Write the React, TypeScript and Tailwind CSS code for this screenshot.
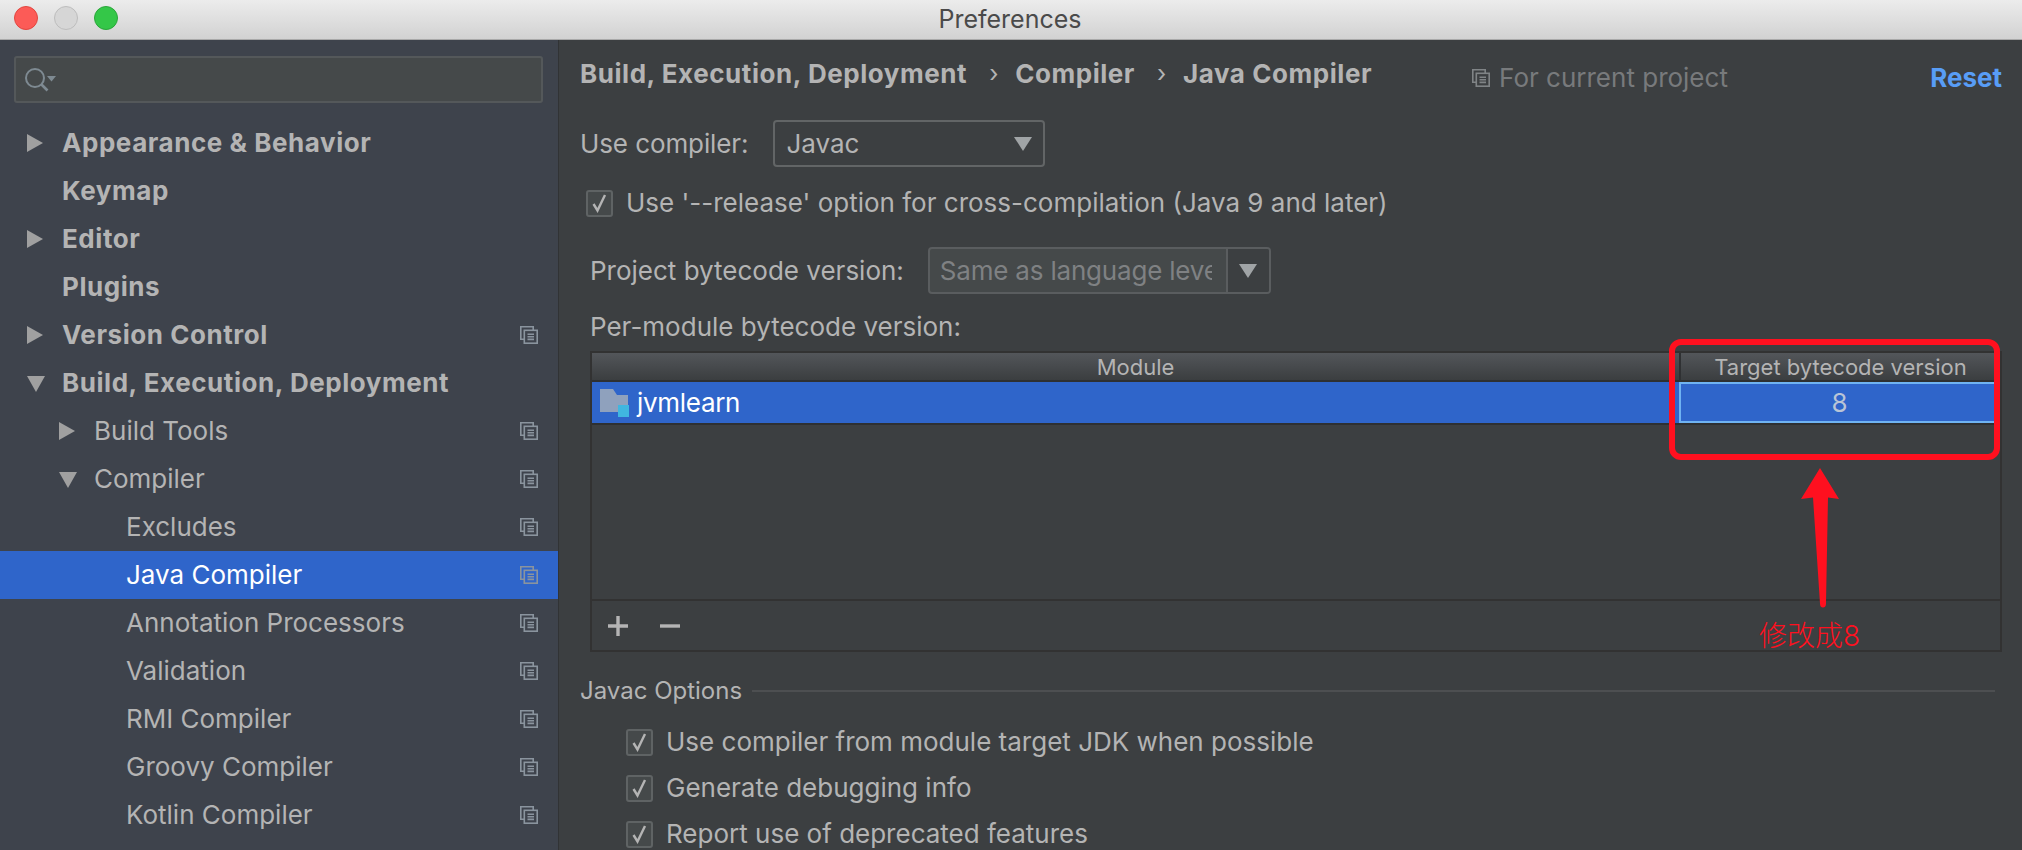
import React from "react";

function CopyIcon({ className = "text-[#8a949e]" }: { className?: string }) {
  return (
    <svg width="18" height="18" viewBox="0 0 18 18" fill="none" stroke="currentColor" strokeWidth="1.6" className={`shrink-0 ${className}`}>
      <path d="M4 13.2H.8V.8h12.4V4" />
      <rect x="4.3" y="4.3" width="12.9" height="12.9" />
      <path d="M7.5 8.2h6.5M7.5 10.8h6.5M7.5 13.4h6.5" />
    </svg>
  );
}

function Tri({ open }: { open?: boolean }) {
  return open ? (
    <svg width="18" height="18" viewBox="0 0 18 18" className="shrink-0"><path d="M0 2h18L9 18z" fill="#a0a0a0" /></svg>
  ) : (
    <svg width="16" height="18" viewBox="0 0 16 18" className="shrink-0"><path d="M0 0l16 9L0 18z" fill="#a0a0a0" /></svg>
  );
}

type Row = { label: string; level: number; bold?: boolean; arrow?: "open" | "closed"; icon?: boolean; selected?: boolean };

const rows: Row[] = [
  { label: "Appearance & Behavior", level: 0, bold: true, arrow: "closed" },
  { label: "Keymap", level: 0, bold: true },
  { label: "Editor", level: 0, bold: true, arrow: "closed" },
  { label: "Plugins", level: 0, bold: true },
  { label: "Version Control", level: 0, bold: true, arrow: "closed", icon: true },
  { label: "Build, Execution, Deployment", level: 0, bold: true, arrow: "open" },
  { label: "Build Tools", level: 1, arrow: "closed", icon: true },
  { label: "Compiler", level: 1, arrow: "open", icon: true },
  { label: "Excludes", level: 2, icon: true },
  { label: "Java Compiler", level: 2, icon: true, selected: true },
  { label: "Annotation Processors", level: 2, icon: true },
  { label: "Validation", level: 2, icon: true },
  { label: "RMI Compiler", level: 2, icon: true },
  { label: "Groovy Compiler", level: 2, icon: true },
  { label: "Kotlin Compiler", level: 2, icon: true },
];

const padClass = ["pl-[62px]", "pl-[94px]", "pl-[126px]"];
const arrowPos = ["left-[27px]", "left-[59px]", "left-[91px]"];

function TreeRow({ r }: { r: Row }) {
  return (
    <div className={`relative flex h-[48px] items-center pr-[20px] ${padClass[r.level]} ${r.selected ? "bg-[#2f65ca] text-white" : "text-[#b4b4b4]"}`}>
      {r.arrow && (
        <span className={`absolute top-[15px] ${arrowPos[r.level]}`}>
          <Tri open={r.arrow === "open"} />
        </span>
      )}
      <span className={`flex-1 text-[26px] leading-none ${r.bold ? "font-bold tracking-[0.55px]" : "font-normal"}`}>{r.label}</span>
      {r.icon && <CopyIcon />}
    </div>
  );
}

function Check() {
  return (
    <span className="flex h-[27px] w-[27px] shrink-0 items-center justify-center rounded-[3px] border-2 border-[#5f6364] bg-[#45494a]">
      <svg width="15" height="20" viewBox="0 0 15 20" fill="none" stroke="#b4b4b4" strokeWidth="2.4">
        <path d="M1.5 11l4 6.5L13 2" />
      </svg>
    </span>
  );
}

function CheckRow({ label }: { label: string }) {
  return (
    <div className="flex h-[46px] items-center gap-[13px]">
      <Check />
      <span className="text-[26px] leading-none text-[#b4b4b4]">{label}</span>
    </div>
  );
}

function Caret() {
  return <svg width="18" height="14" viewBox="0 0 18 14"><path d="M0 0h18L9 14z" fill="#a0a4a6" /></svg>;
}

function FolderIcon() {
  return (
    <svg width="29" height="28" viewBox="0 0 29 28" className="shrink-0">
      <path d="M0 0h13l4 6h11v17H0z" fill="#8fa1bd" />
      <rect x="18" y="16" width="11" height="12" fill="#40b6e0" />
    </svg>
  );
}

export default function App() {
  return (
    <div className="relative flex h-[850px] w-[2022px] flex-col overflow-hidden bg-[#3c3f41] font-['Inter','Noto_Sans_CJK_SC',sans-serif]">
      {/* title bar */}
      <header className="relative flex h-[40px] shrink-0 items-center justify-center border-b border-[#a9a9a9] bg-gradient-to-b from-[#ececec] to-[#d2d2d2]">
        <div className="absolute left-[14px] top-[6px] flex gap-[16px]">
          <span className="h-[24px] w-[24px] rounded-full border border-[#e2463f] bg-[#fc5b57]" />
          <span className="h-[24px] w-[24px] rounded-full border border-[#bdbdbd] bg-[#d6d6d6]" />
          <span className="h-[24px] w-[24px] rounded-full border border-[#2aa63a] bg-[#34c748]" />
        </div>
        <span className="-ml-[2px] text-[25px] leading-none text-[#4a4a4a]">Preferences</span>
      </header>

      <div className="flex flex-1">
        {/* sidebar */}
        <aside className="w-[559px] shrink-0 border-r border-[#313335] bg-[#3e434c]">
          <div className="ml-[14px] mr-[15px] mt-[16px] flex h-[47px] items-center rounded-[3px] border-2 border-[#54585a] bg-[#45494a] pl-[8px]">
            <svg width="34" height="26" viewBox="0 0 34 26" fill="none" stroke="#7e8a92" strokeWidth="2">
              <circle cx="11" cy="11" r="9" />
              <path d="M17.5 17.5l6 6" strokeWidth="2.6" />
              <path d="M23 9h9l-4.5 5.5z" fill="#7e8a92" stroke="none" />
            </svg>
          </div>
          <nav className="mt-[16px]">
            {rows.map((r) => (
              <TreeRow key={r.label} r={r} />
            ))}
          </nav>
        </aside>

        {/* content */}
        <main className="relative flex-1 pl-[21px] pr-[20px] text-[#b4b4b4]">
          <div className="flex h-[67px] items-center">
            <span className="text-[26px] font-bold leading-none tracking-[0.55px]">Build, Execution, Deployment</span>
            <span className="ml-[22px] w-[26px] text-[24px] leading-none">›</span>
            <span className="text-[26px] font-bold leading-none tracking-[0.55px]">Compiler</span>
            <span className="ml-[22px] w-[26px] text-[24px] leading-none">›</span>
            <span className="text-[26px] font-bold leading-none tracking-[0.55px]">Java Compiler</span>
            <span className="ml-[100px] mt-[8px] flex items-center gap-[9px]">
              <CopyIcon className="text-[#808486]" />
              <span className="text-[26px] leading-none text-[#787a7c]">For current project</span>
            </span>
            <span className="ml-auto mt-[8px] text-[26px] font-bold leading-none text-[#589df6]">Reset</span>
          </div>

          <div className="mt-[13px] flex items-center gap-[25px]">
            <span className="text-[26px] leading-none tracking-[-0.1px]">Use compiler:</span>
            <div className="flex h-[47px] w-[272px] items-center justify-between rounded-[4px] border-2 border-[#626566] bg-[#3c3f41] pl-[11px] pr-[11px]">
              <span className="text-[26px] leading-none">Javac</span>
              <Caret />
            </div>
          </div>

          <div className="ml-[6px] mt-[13px] flex h-[46px] items-center gap-[13px]">
            <Check />
            <span className="text-[26px] leading-none">Use '--release' option for cross-compilation (Java 9 and later)</span>
          </div>

          <div className="ml-[10px] mt-[21px] flex items-center gap-[24px]">
            <span className="text-[26px] leading-none">Project bytecode version:</span>
            <div className="flex h-[47px] w-[343px] items-stretch overflow-hidden rounded-[4px] border-2 border-[#5a5d5f] bg-[#45494a]">
              <span className="flex min-w-0 flex-1 items-center pl-[10px] pr-[14px]">
                <span className="block min-w-0 overflow-hidden whitespace-nowrap text-[26px] leading-[30px] tracking-[-0.2px] text-[#7f8183]">Same as language level</span>
              </span>
              <span className="flex w-[43px] shrink-0 items-center justify-center border-l-2 border-[#5a5d5f] bg-[#3c3f41]">
                <Caret />
              </span>
            </div>
          </div>

          <div className="ml-[10px] mt-[17px] flex h-[32px] items-center text-[26px] leading-none">Per-module bytecode version:</div>

          {/* table */}
          <div className="ml-[10px] mt-[8px] w-[1412px] border-2 border-[#323232] bg-[#3c3f41]">
            <div className="flex h-[27px] bg-gradient-to-b from-[#53565a] to-[#3b3e40] text-[22px] leading-none text-[#b4b4b4]">
              <div className="flex flex-1 items-center justify-center">Module</div>
              <div className="flex w-[321px] items-center justify-center border-l-2 border-[#2f3133]">Target bytecode version</div>
            </div>
            <div className="flex h-[45px] border-y-2 border-[#2e3032] bg-[#2f65ca]">
              <div className="flex flex-1 items-center gap-[8px] pl-[8px] text-[26px] leading-none tracking-[-0.3px] text-white">
                <FolderIcon />
                <span>jvmlearn</span>
              </div>
              <div className="flex w-[321px] items-center justify-center border-2 border-[#6fb3f2] text-[26px] leading-none text-[#b9c4d6]">8</div>
            </div>
            <div className="h-[176px] border-b-2 border-[#323232]" />
            <div className="flex h-[49px] items-center gap-[29px] pl-[14px]">
              <svg width="24" height="24" viewBox="0 0 24 24" stroke="#b4b4b4" strokeWidth="3.4"><path d="M12 2v20M2 12h20" /></svg>
              <svg width="22" height="24" viewBox="0 0 22 24" stroke="#b4b4b4" strokeWidth="3.4"><path d="M1 12h20" /></svg>
            </div>
          </div>

          {/* Javac options */}
          <div className="mt-[23px] flex h-[32px] items-center gap-[10px]">
            <span className="text-[24px] leading-none">Javac Options</span>
            <span className="h-[2px] w-[1243px] bg-[#4d4f51]" />
          </div>
          <div className="ml-[46px] mt-[12px]">
            <CheckRow label="Use compiler from module target JDK when possible" />
            <CheckRow label="Generate debugging info" />
            <CheckRow label="Report use of deprecated features" />
          </div>

          {/* annotations */}
          <div className="absolute left-[1110px] top-[299px] h-[121px] w-[331px] rounded-[12px] border-[6px] border-[#ff101f]" />
          <svg className="absolute left-[1235px] top-[426px]" width="50" height="144" viewBox="0 0 50 144">
            <path d="M26 2L45 33l-11-1.5-2 106q0 4-3 4t-3-4l-7-106L7 33z" fill="#ff101f" />
          </svg>
          <span className="absolute left-[1200px] top-[582px] text-[28px] font-light leading-[28px] text-[#ff101f]">修改成8</span>
        </main>
      </div>
    </div>
  );
}
